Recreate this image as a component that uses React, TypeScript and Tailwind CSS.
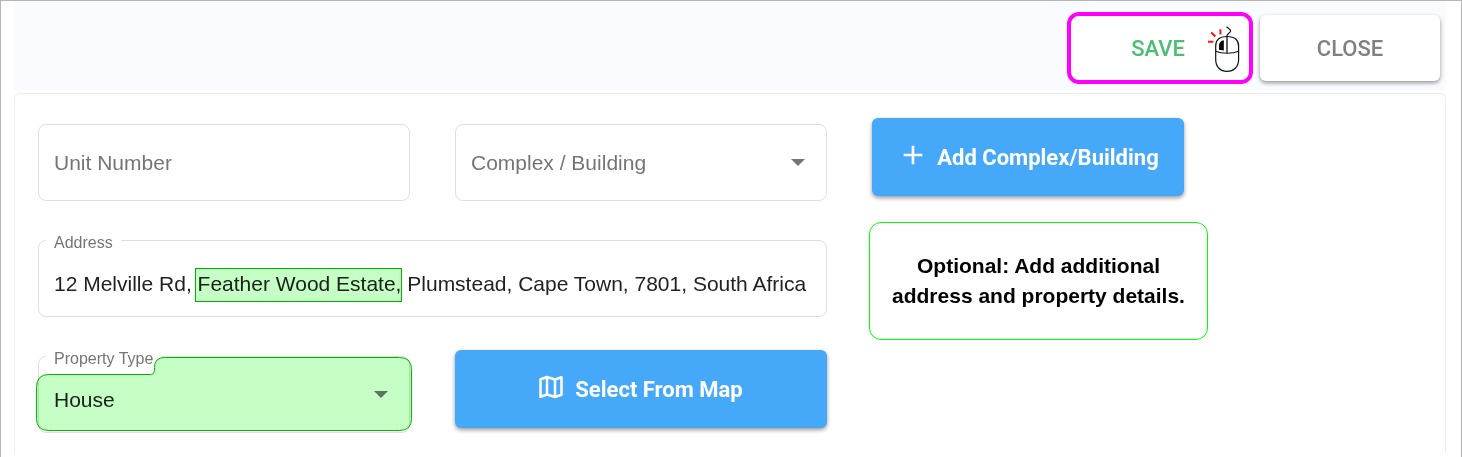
import type { ReactNode } from "react";
import { MdAdd } from "react-icons/md";

function ClickMouse() {
  return (
    <svg viewBox="0 0 34 48" fill="none" className="h-12 w-[34px]" aria-hidden="true">
      <path
        d="M20 11.5C11.500 11.500 8.700 16 8.700 21V34.500C8.700 42 13.500 46.400 20 46.400S31.600 42 31.600 34.500V21C31.600 16 28.500 11.500 20 11.500Z"
        stroke="#111"
        strokeWidth="1.200"
      />
      <path d="M8.700 26.300C15 28.900 25.500 28.900 31.600 26.300" stroke="#111" strokeWidth="1.200" />
      <path d="M20 11.500V28" stroke="#111" strokeWidth="1.300" />
      <path d="M19.500 1.800C21.500 3.500 25 4.800 23 7.200C21.500 8.800 19.700 9.300 19.700 11.500" stroke="#111" strokeWidth="1.200" />
      <path d="M16.800 15.200V25.500L12 24.800V20.500C12 17.500 14 15.600 16.800 15.200Z" fill="#000" />
      <path d="M1 16.800H6.400M4.200 7.600L8.400 11.500M13.400 4.200V9.600" stroke="#f11" strokeWidth="2" />
    </svg>
  );
}

function MapIcon() {
  return (
    <svg viewBox="0 0 24 24" fill="none" className="mr-1 mb-1 h-6 w-6" aria-hidden="true">
      <path
        d="M1.500 4.200L8 2L16 4.500L22.500 2.200V19.800L16 22L8 19.500L1.500 21.800ZM8 2V19.500M16 4.500V22"
        stroke="currentColor"
        strokeWidth="2.500"
        strokeLinejoin="round"
      />
    </svg>
  );
}

function Arrow() {
  return (
    <svg viewBox="0 0 14 7" className="pointer-events-none absolute top-[34px] right-[21px] h-[7px] w-[14px]" aria-hidden="true">
      <path d="M0 0H14L7 7Z" fill="#757575" />
    </svg>
  );
}

function Field({ className = "", children }: { className?: string; children: ReactNode }) {
  return (
    <div className={`pt-1.5 ${className}`}>
      <div className="relative h-[77px] rounded-lg border border-[#dfdfdf]">{children}</div>
    </div>
  );
}

const restingLabel =
  "pointer-events-none absolute inset-y-0 left-[15px] flex items-center text-[21px] text-[#757575]";
const floatingLabel = "absolute -top-1.5 left-[7px] bg-white px-2 text-[16px] leading-4 text-[#757575]";
const control = "h-full w-full appearance-none bg-transparent px-[15px] text-[21px] text-[#222] outline-none";
const blueButton =
  "flex h-[78px] items-center justify-center rounded-md bg-[#46a8f9] font-[Roboto,sans-serif] text-[22px] font-bold text-white shadow-[0_2px_4px_rgba(0,0,0,0.4)]";

export default function App() {
  return (
    <div className="flex min-h-screen flex-col border border-[#b5b5b5] bg-white pr-[15px] pb-1 pl-[13px] font-['Liberation_Sans',Arial,sans-serif]">
      <header className="flex items-center justify-end gap-[7px] bg-[#fafbfe] pt-[11px] pr-1.5 pb-1.5 font-[Roboto,sans-serif] text-[22px] font-medium">
        <button className="relative h-[72px] w-[186px] rounded-xl border-4 border-[#ff00ff] bg-white pr-1 text-[#4dbd74]">
          SAVE
          <span className="absolute top-[9px] right-2">
            <ClickMouse />
          </span>
        </button>
        <button className="h-[66px] w-[180px] rounded-md bg-white text-[#808080] shadow-[0_2px_4px_rgba(0,0,0,0.4)]">
          CLOSE
        </button>
      </header>

      <main className="mt-[3px] grid flex-1 grid-cols-[789fr_553fr] items-start gap-[42px] rounded-t-md border-x border-t border-[#efefef] px-[23px] pt-6 pb-5">
        <form className="grid grid-cols-2 gap-x-[45px] gap-y-[33px]">
          <Field>
            <input id="unit" className={control} />
            <label htmlFor="unit" className={restingLabel}>
              Unit Number
            </label>
          </Field>

          <Field>
            <select id="complex" className={control}>
              <option value=""></option>
            </select>
            <label htmlFor="complex" className={restingLabel}>
              Complex / Building
            </label>
            <Arrow />
          </Field>

          <Field className="col-span-2">
            <label htmlFor="address" className={floatingLabel}>
              Address
            </label>
            <input
              id="address"
              className={`${control} pt-2.5`}
              defaultValue="12 Melville Rd, Feather Wood Estate, Plumstead, Cape Town, 7801, South Africa"
            />
            <span className="pointer-events-none absolute top-[27px] left-[156px] h-[34px] w-[207px] border border-[#00b400] bg-[#c5ffc5] mix-blend-multiply" />
          </Field>

          <Field>
            <label htmlFor="type" className={floatingLabel}>
              Property Type
            </label>
            <select id="type" className={`${control} pt-2.5`} defaultValue="House">
              <option>House</option>
            </select>
            <Arrow />
            <svg
              viewBox="0 0 376 75"
              preserveAspectRatio="none"
              className="pointer-events-none absolute top-0 -left-[3px] h-[75px] w-[calc(100%+6px)] mix-blend-multiply"
              aria-hidden="true"
            >
              <path
                d="M0.500 30.500Q0.500 17.500 12.500 17.500H114.500Q118.500 17.500 118.500 13.500V10.500Q118.500 0.500 128.500 0.500H363.500Q375.500 0.500 375.500 12.500V61.500Q375.500 73.500 363.500 73.500H12.500Q0.500 73.500 0.500 61.500Z"
                fill="#c5ffc5"
                stroke="#00b400"
                vectorEffect="non-scaling-stroke"
              />
            </svg>
          </Field>

          <button type="button" className={`${blueButton} gap-2`}>
            <MapIcon />
            Select From Map
          </button>
        </form>

        <aside className="flex flex-col items-start gap-[26px]">
          <div className="px-[3px]">
            <button type="button" className={`${blueButton} w-[312px] gap-2`}>
              <MdAdd size={32} className="mb-1" />
              Add Complex/Building
            </button>
          </div>
          <p className="flex h-[118px] w-[339px] items-center justify-center rounded-xl border border-[#00ff00] px-3 text-center text-[21px] leading-[30px] font-bold text-black">
            <span className="max-w-[300px]">Optional: Add additional address and property details.</span>
          </p>
        </aside>
      </main>
    </div>
  );
}
